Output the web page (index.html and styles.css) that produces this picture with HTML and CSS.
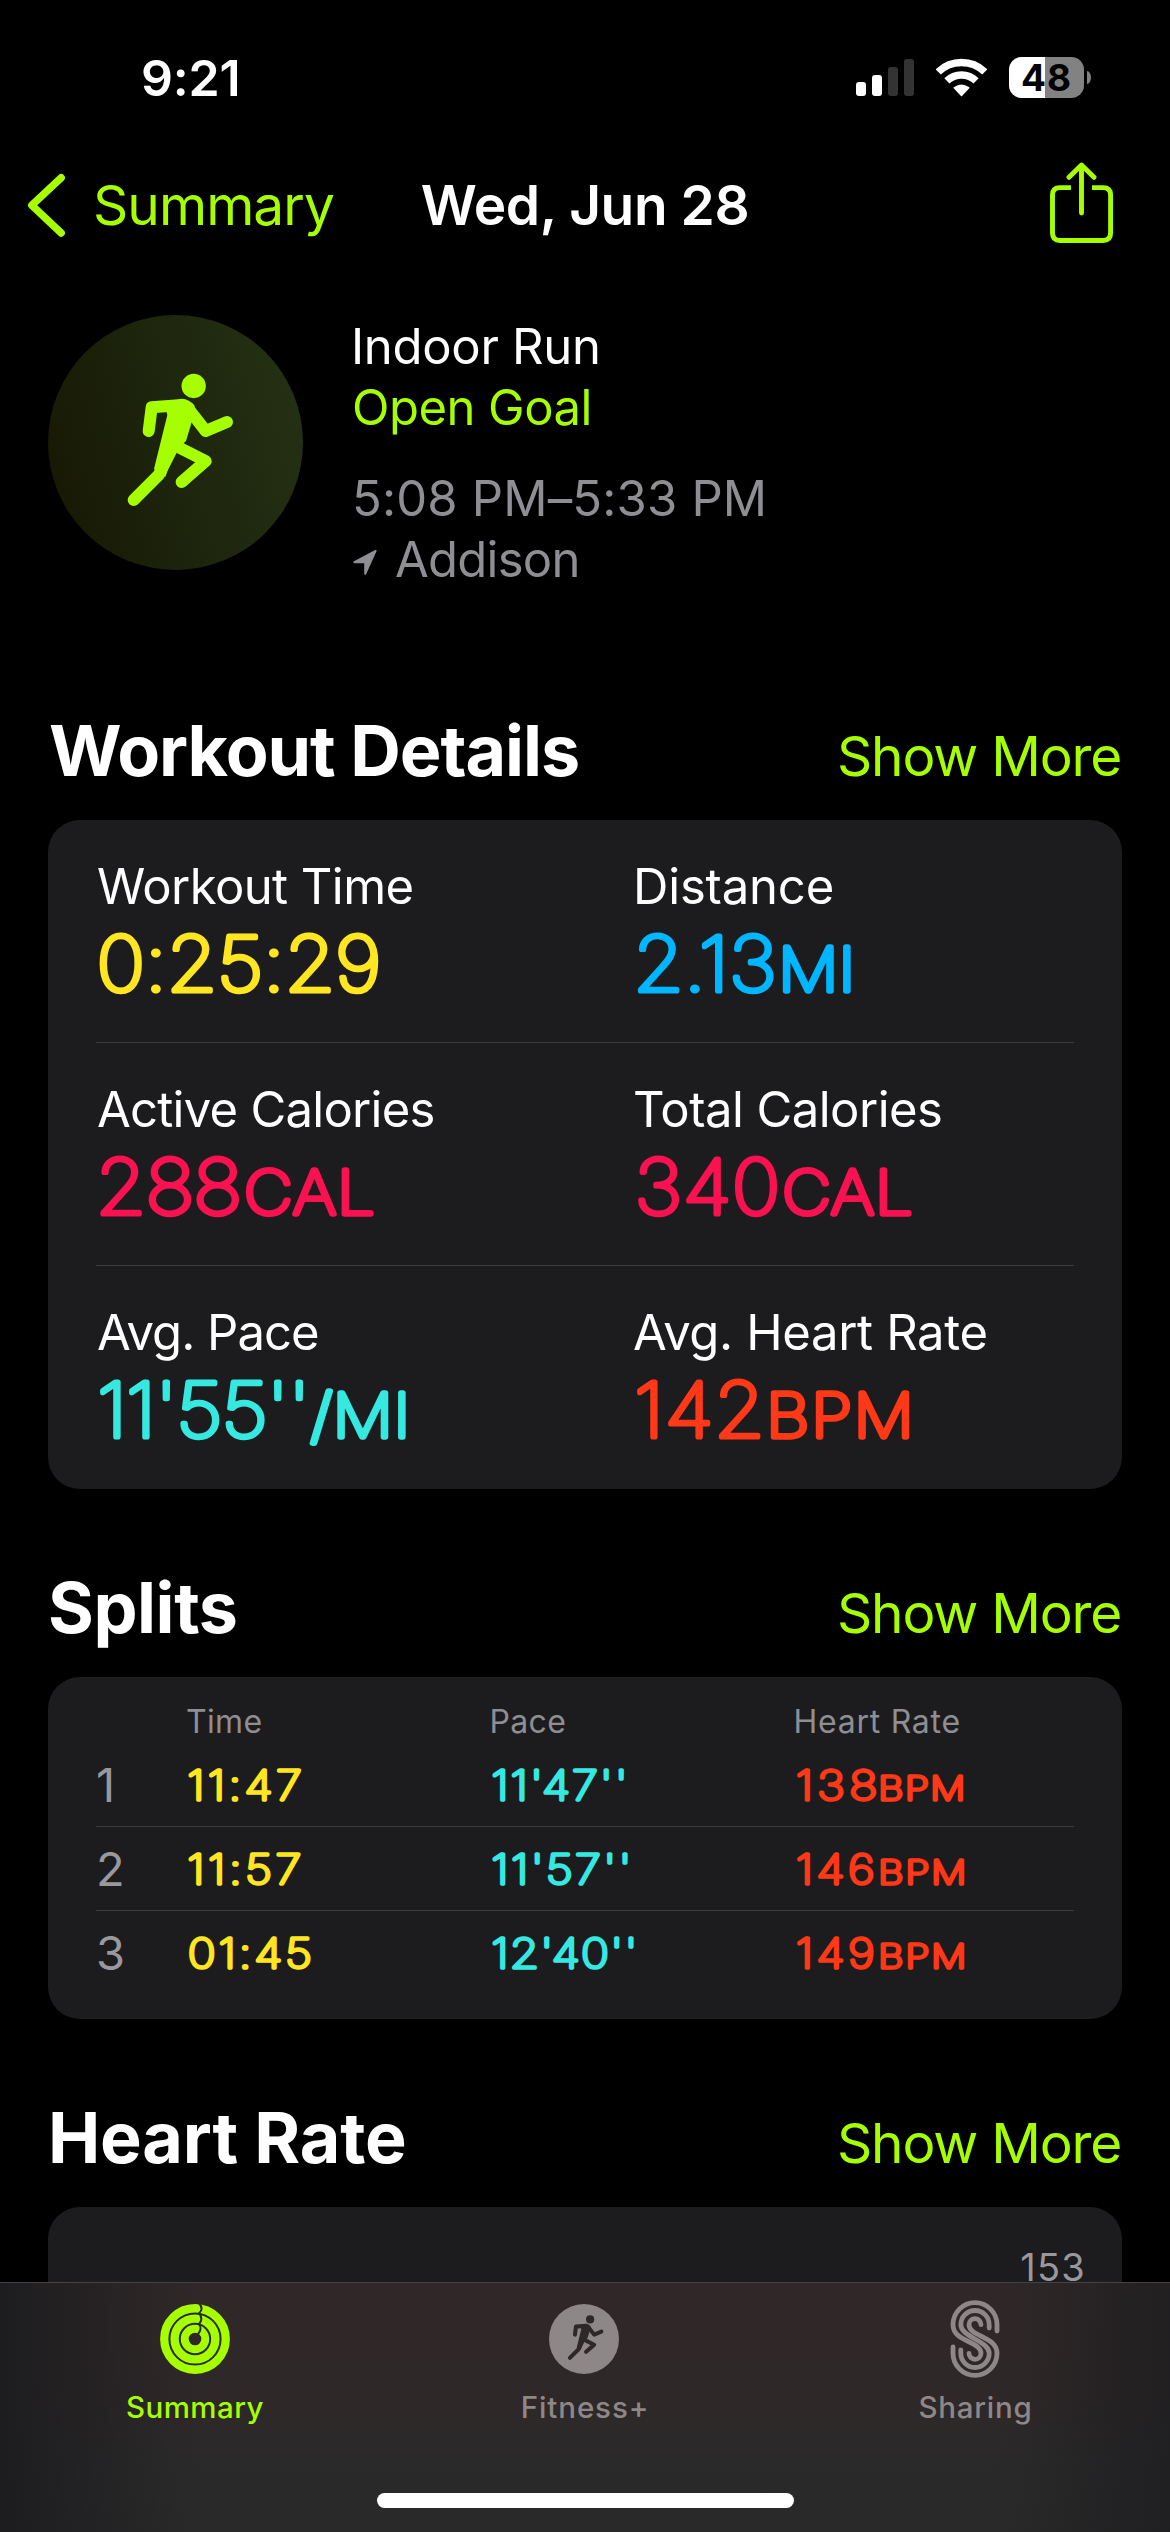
FILE: index.html
```html
<!DOCTYPE html>
<html lang="en">
<head>
<meta charset="utf-8">
<title>Wed, Jun 28 – Indoor Run</title>
<link rel="stylesheet" href="styles.css">
</head>
<body>
<svg class="defs" width="0" height="0" aria-hidden="true">
  <symbol id="runner" viewBox="0 0 765 765">
    <circle cx="437" cy="213" r="36.5"/>
    <path d="M350 268 L400 251 Q425 252 440 272 L431 322 L414 378 L378 411 L352 486 L318 462 L358 300 Z"/>
    <g fill="none" stroke="currentColor" stroke-width="36" stroke-linecap="round" stroke-linejoin="round">
      <path d="M302 348 L311 277 L402 270 L425 286 L473 348 L537 321"/>
      <path d="M378 390 L473 438 L401 501"/>
      <path d="M375 395 L332 480 L257 555"/>
    </g>
  </symbol>
</svg>

<header class="status">
  <span class="status-time">9:21</span>
  <div class="status-icons">
    <svg width="58" height="42" viewBox="856 57 58 42">
      <rect x="856" y="82" width="10" height="14" rx="3" fill="#fff"/>
      <rect x="872" y="75" width="10" height="21" rx="3" fill="#fff"/>
      <rect x="888" y="67" width="10" height="29" rx="3" fill="#333"/>
      <rect x="904" y="59" width="10" height="37" rx="3" fill="#333"/>
    </svg>
    <svg width="51" height="42" viewBox="936 57 51 42">
      <g fill="none" stroke="#fff" stroke-width="7.4">
        <path d="M938.2 71.9 A33.5 33.5 0 0 1 984.8 71.9"/>
        <path d="M946.9 80.9 A21 21 0 0 1 976.1 80.9"/>
      </g>
      <path d="M961.5 95.5 L954.3 87.8 Q961.5 82.8 968.7 87.8 Z" fill="#fff" stroke="#fff" stroke-width="1.6" stroke-linejoin="round"/>
    </svg>
    <div class="battery"><span class="battery-body">48</span><span class="battery-cap"></span></div>
  </div>
</header>

<nav class="nav">
  <a class="back">
    <svg width="38" height="64" viewBox="28 173 38 64"><path d="M61.2 177.7 L31.8 205.3 L61.2 233" fill="none" stroke="#a6ff00" stroke-width="7.4" stroke-linecap="round" stroke-linejoin="round"/></svg>
    <span>Summary</span>
  </a>
  <h1 class="title">Wed, Jun 28</h1>
  <svg class="share" width="64" height="82" viewBox="1050 162 64 82">
    <g fill="none" stroke="#a6ff00" stroke-width="4.9" stroke-linecap="round" stroke-linejoin="round">
      <path d="M1071 187.6 H1060 Q1052.5 187.6 1052.5 195 V233 Q1052.5 240.5 1060 240.5 H1103 Q1110.6 240.5 1110.6 233 V195 Q1110.6 187.6 1103 187.6 H1092" stroke-linecap="butt"/>
      <path d="M1081.5 165.5 V213 M1069 177.3 L1081.5 165 L1094 177.3"/>
    </g>
  </svg>
</nav>

<main>
  <section class="workout">
    <div class="badge"><svg width="255" height="255"><use href="#runner"/></svg></div>
    <div class="workout-text">
      <p class="name">Indoor Run</p>
      <p class="goal">Open Goal</p>
      <p class="hours">5:08 PM–5:33 PM</p>
      <p class="place">
        <svg width="25" height="27" viewBox="0 0 25 27"><path d="M22.6 1.8 L12.2 24.8 V13.2 H1.4 Z" fill="#8e8e93" stroke="#8e8e93" stroke-width="2" stroke-linejoin="round"/></svg>
        <span>Addison</span>
      </p>
    </div>
  </section>

  <header class="section-head"><h2 class="h-details">Workout Details</h2><a class="more">Show More</a></header>
  <section class="card details">
    <div class="row">
      <div class="cell"><p class="l-wt">Workout Time</p>
        <svg class="value yellow"><text x="-.4" y="75" letter-spacing="-.42">0:25:29</text></svg></div>
      <div class="cell"><p class="l-di">Distance</p>
        <svg class="value blue"><text x="0" y="75" letter-spacing="-.1">2.13</text><text class="unit" x="145.3" y="75" letter-spacing="0">MI</text></svg></div>
    </div>
    <div class="row">
      <div class="cell"><p class="l-ac">Active Calories</p>
        <svg class="value pink"><text x="-1.5" y="75" letter-spacing="-.98">288</text><text class="unit" x="147" y="75" letter-spacing=".9">CAL</text></svg></div>
      <div class="cell"><p class="l-tc">Total Calories</p>
        <svg class="value pink"><text x="1.6" y="75" letter-spacing=".28">340</text><text class="unit" x="149.2" y="75" letter-spacing=".9">CAL</text></svg></div>
    </div>
    <div class="row">
      <div class="cell"><p class="l-ap">Avg. Pace</p>
        <svg class="value cyan"><text x="0" y="75" letter-spacing="-1.07">11'55''</text><text class="unit" x="213.5" y="75" letter-spacing=".54">/MI</text></svg></div>
      <div class="cell"><p class="l-hr">Avg. Heart Rate</p>
        <svg class="value red"><text x="1" y="75" letter-spacing=".55">142</text><text class="unit" x="133.3" y="75" letter-spacing="1.72">BPM</text></svg></div>
    </div>
  </section>

  <header class="section-head"><h2 class="h-splits">Splits</h2><a class="more">Show More</a></header>
  <section class="card splits">
    <div class="split head"><span></span><span>Time</span><span>Pace</span><span class="wide">Heart Rate</span></div>
    <div class="split">
      <span class="index">1</span>
      <svg class="small yellow"><text x="1.2" y="57" letter-spacing="2.9">11:47</text></svg>
      <svg class="small cyan"><text x="1.2" y="57" letter-spacing="1.77">11'47''</text></svg>
      <svg class="small red"><text x="1.7" y="57" letter-spacing="3.8">138</text><text class="unit" x="84.3" y="57" letter-spacing="1.4">BPM</text></svg>
    </div>
    <div class="split">
      <span class="index">2</span>
      <svg class="small yellow"><text x="1.2" y="57" letter-spacing="3.1">11:57</text></svg>
      <svg class="small cyan"><text x="1.2" y="57" letter-spacing="2.1">11'57''</text></svg>
      <svg class="small red"><text x="1.7" y="57" letter-spacing="3">146</text><text class="unit" x="84.3" y="57" letter-spacing="1.8">BPM</text></svg>
    </div>
    <div class="split">
      <span class="index">3</span>
      <svg class="small yellow"><text x="1.7" y="57" letter-spacing="2.54">01:45</text></svg>
      <svg class="small cyan"><text x="1.2" y="57" letter-spacing="1.13">12'40''</text></svg>
      <svg class="small red"><text x="1.7" y="57" letter-spacing="3">149</text><text class="unit" x="84.3" y="57" letter-spacing="1.8">BPM</text></svg>
    </div>
  </section>

  <header class="section-head"><h2 class="h-heart">Heart Rate</h2><a class="more">Show More</a></header>
  <section class="card chart"><span>153</span></section>
</main>

<footer class="tabbar">
  <div class="tabs">
    <a class="tab active">
      <svg width="80" height="80" viewBox="-40 -40 80 80">
        <circle r="20.6" fill="none" stroke="#a6ff00" stroke-width="28.6"/>
        <g fill="none" stroke="#2b2a2a" stroke-width="2">
          <circle r="25.6"/><circle r="15.2"/>
          <path d="M4 -36 Q9 -30 4 -25.8 Q8.6 -20 4 -15 Q7.5 -10 3 -5"/>
        </g>
      </svg>
      <span>Summary</span>
    </a>
    <a class="tab">
      <svg width="80" height="80" viewBox="-40 -40 80 80">
        <circle cx="-1" r="35" fill="#8e8787"/>
        <use class="mini" href="#runner" x="-44" y="-43.5" width="86" height="86"/>
      </svg>
      <span class="t-fit">Fitness+</span>
    </a>
    <a class="tab">
      <svg width="80" height="80" viewBox="-40 -40 80 80">
        <g fill="none" stroke="#8e8787" stroke-width="4.8" stroke-linecap="round">
          <path d="M22 -8 V-14.3 A22 22 0 0 0 -22 -14.3 C-22 3 6 2 6 14.3 A6 6 0 0 1 -6 14.3"/>
          <path d="M14.2 -11 V-14.3 A14.2 14.2 0 0 0 -14.2 -14.3 C-14.2 -2 14.2 2 14.2 14.3 A14.2 14.2 0 0 1 -14.2 14.3 V11"/>
          <path d="M-22 8 V14.3 A22 22 0 0 0 22 14.3 C22 -3 -6 -2 -6 -14.3 A6 6 0 0 1 6 -14.3"/>
        </g>
      </svg>
      <span class="t-share">Sharing</span>
    </a>
  </div>
  <div class="home"></div>
</footer>
</body>
</html>
```
FILE: styles.css
```css
* { box-sizing: border-box; }
html, body { height: 2532px; }
body {
  margin: 0;
  width: 1170px;
  background: #000;
  color: #fff;
  font-family: Inter, "Liberation Sans", sans-serif;
  position: relative;
}
p, h1, h2 { margin: 0; }
svg { display: block; flex: none; }
.defs { position: absolute; }

/* Status bar */
.status {
  height: 156px;
  padding: 0 79px 0 141px;
  display: flex;
  align-items: center;
  justify-content: space-between;
}
.status-time { font-size: 50px; font-weight: 600; letter-spacing: -.23px; }
.status-icons { display: flex; gap: 22px; }
.battery { display: flex; align-items: center; gap: 3px; height: 41px; }
.battery-body {
  width: 75px;
  height: 41px;
  border-radius: 12.5px;
  background: linear-gradient(90deg, #fff 36px, #828282 36px);
  color: #000;
  font-size: 37px;
  font-weight: 700;
  line-height: 42px;
  letter-spacing: .98px;
  padding-left: 12px;
}
.battery-cap { width: 4px; height: 13px; border-radius: 0 4px 4px 0 / 0 6.5px 6.5px 0; background: #828282; }

/* Navigation */
.nav {
  height: 98px;
  padding: 0 56px 0 28px;
  display: grid;
  grid-template-columns: 1fr auto 1fr;
  align-items: center;
  font-size: 55px;
}
.back { display: flex; align-items: center; gap: 27px; color: #a6ff00; letter-spacing: -.95px; }
.title { font-size: 55px; font-weight: 600; letter-spacing: -.4px; position: relative; left: 14px; }
.share { justify-self: end; position: relative; top: -2px; }

/* Workout summary */
.workout {
  height: 454px;
  padding: 61px 48px 0;
  display: flex;
  gap: 49px;
  font-size: 49px;
  line-height: 61px;
}
.workout-text { padding-top: 1px; }
.badge {
  width: 255px;
  height: 255px;
  border-radius: 50%;
  background: linear-gradient(75deg, #171803 5%, #1d240c 45%, #243114 95%);
  color: #a6ff00;
  fill: #a6ff00;
}
.name { letter-spacing: -.29px; margin-left: -1px; }
.goal { letter-spacing: -.53px; color: #a6ff00; }
.hours { letter-spacing: .17px; color: #8e8e93; margin-top: 30px; }
.place { letter-spacing: -.74px; color: #8e8e93; display: flex; align-items: center; gap: 17px; padding-left: 1px; }
.place svg { margin-top: 5px; }

/* Sections */
.section-head {
  height: 112px;
  padding: 1px 48px 27px;
  display: flex;
  align-items: baseline;
  justify-content: space-between;
  line-height: 84px;
}
h2 { font-size: 70px; font-weight: 700; }
.h-details { letter-spacing: -1.02px; margin-left: 1px; }
.h-splits { letter-spacing: -.44px; }
.h-heart { letter-spacing: -.18px; }
.more { font-size: 55px; letter-spacing: -1.2px; color: #a6ff00; margin-right: 1px; }
.card { margin: 0 48px 76px; background: #1c1c1e; border-radius: 32px; }

/* Detail grid */
.details { padding: 0 48px; height: 669px; }
.row { height: 223px; padding: 36px 0 0 1px; display: grid; grid-template-columns: 536px 1fr; border-bottom: 1px solid #3c3c3e; }
.row:last-child { border-bottom: 0; }
.cell p { font-size: 49px; line-height: 61px; margin-bottom: -1px; white-space: nowrap; }
.l-wt { letter-spacing: -.57px; }
.l-di { letter-spacing: -.16px; }
.l-ac { letter-spacing: -.74px; }
.l-tc { letter-spacing: -.52px; }
.l-ap { letter-spacing: -.98px; }
.l-hr { letter-spacing: -.35px; }

/* Rounded numerals: hairline weight, widened and thickened by a round-joined stroke */
.value, .small { overflow: visible; font-weight: 100; stroke: currentColor; fill: currentColor; stroke-linejoin: round; }
.value text, .small text { transform-box: fill-box; transform-origin: left center; transform: scaleX(1.08); }
.value { width: 430px; height: 90px; font-size: 76px; stroke-width: 5.1px; }
.value .unit { font-size: 60px; stroke-width: 5.4px; transform: scaleX(1.12); }
.small { width: 240px; height: 84px; font-size: 41px; stroke-width: 3.6px; }
.small text { transform: scaleX(1.15); }
.small .unit { font-size: 32px; stroke-width: 3.6px; transform: scaleX(1.22); }
.yellow { color: #ffe620; }
.blue { color: #00b7ff; }
.pink { color: #fa114f; }
.cyan { color: #35e9e1; }
.red { color: #ff3817; }

/* Splits */
.splits { height: 342px; padding: 23px 48px 0; }
.split { height: 84px; display: grid; grid-template-columns: 90px 303.5px 304px 1fr; border-bottom: 1px solid #3c3c3e; color: #8e8e93; }
.split:last-child { border-bottom: 0; }
.split.head { height: 43px; border: 0; font-size: 32px; line-height: 43px; letter-spacing: .34px; }
.split .wide { letter-spacing: .74px; }
.index { font-size: 47px; line-height: 84px; color: #98989d; }

/* Chart */
.chart { height: 325px; margin-bottom: 0; padding: 36px 36px 0 0; text-align: right; color: #98989d; font-size: 38px; line-height: 48px; letter-spacing: 1.22px; }

/* Tab bar */
.tabbar {
  position: absolute;
  left: 0;
  right: 0;
  bottom: 0;
  height: 250px;
  border-top: 1px solid #434244;
  padding-top: 16px;
  background:
    linear-gradient(90deg, rgba(28,28,30,.95), rgba(28,28,30,0) 17%, rgba(28,28,30,0) 85%, rgba(28,28,30,.75)),
    linear-gradient(180deg, #302828 0%, #2f2828 45%, #2b2a2b 70%, #29292a 100%);
}
.tabs { display: grid; grid-template-columns: repeat(3, 1fr); }
.tab { display: flex; flex-direction: column; align-items: center; gap: 10px; color: #8e8787; font-size: 29.5px; font-weight: 500; line-height: 36px; letter-spacing: .45px; }
.tab.active { color: #a6ff00; }
.t-fit { letter-spacing: .9px; }
.t-share { letter-spacing: .75px; margin-left: 1px; }
.mini { color: #2f2828; fill: #2f2828; }
.home { width: 417px; height: 15px; border-radius: 8px; background: #fff; margin: 68px auto 0; }
```
